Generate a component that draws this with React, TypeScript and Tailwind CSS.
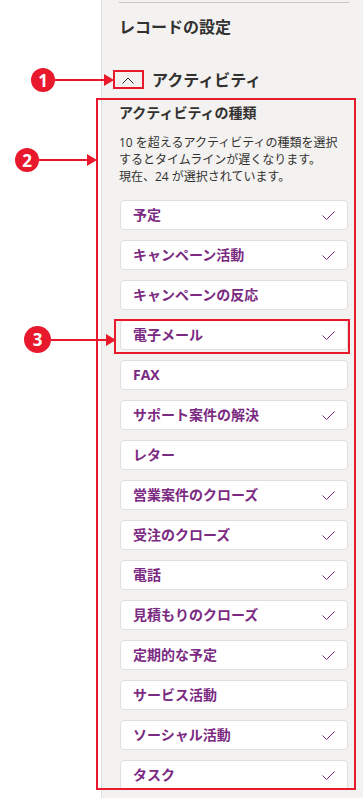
import React from "react";

const items: { label: string; checked: boolean }[] = [
  { label: "予定", checked: true },
  { label: "キャンペーン活動", checked: true },
  { label: "キャンペーンの反応", checked: false },
  { label: "電子メール", checked: true },
  { label: "FAX", checked: false },
  { label: "サポート案件の解決", checked: true },
  { label: "レター", checked: false },
  { label: "営業案件のクローズ", checked: true },
  { label: "受注のクローズ", checked: true },
  { label: "電話", checked: true },
  { label: "見積もりのクローズ", checked: true },
  { label: "定期的な予定", checked: true },
  { label: "サービス活動", checked: false },
  { label: "ソーシャル活動", checked: true },
  { label: "タスク", checked: true },
];

function Check() {
  return (
    <svg width="13" height="9" viewBox="0 0 13 9" fill="none">
      <polyline points="0.5,4.5 4.5,8.5 12.5,0.5" stroke="#7b2a82" strokeWidth="1" />
    </svg>
  );
}

// numbered red callout: badge, line, arrow head in one row
function Callout({ n, size, line, className }: { n: string; size: string; line: string; className: string }) {
  return (
    <div className={`absolute flex items-center ${className}`}>
      <div
        className={`flex shrink-0 items-center justify-center rounded-full bg-[#e8192c] text-[17px] font-bold leading-none text-white ${size}`}
      >
        {n}
      </div>
      <div className={`h-[2px] bg-[#e8192c] ${line}`} />
      <svg width="10" height="12" viewBox="0 0 10 12" className="-ml-px shrink-0">
        <polygon points="0,0 10,6 0,12" fill="#e8192c" />
      </svg>
    </div>
  );
}

export default function App() {
  return (
    <div
      className="relative flex h-[798px] w-[363px] overflow-hidden bg-white text-[#323130]"
      style={{ fontFamily: '"Open Sans", "Noto Sans CJK JP", sans-serif' }}
    >
      <div className="w-[101px] shrink-0" />

      {/* settings panel */}
      <div className="flex-1 border-l border-[#e1dfdd] bg-[#f3f2f1] pl-[17px]">
        <div className="mt-[2px] h-px w-[230px] bg-[#c8c6c4]" />
        <h2 className="mt-[13px] text-[16px] font-bold leading-[22px]">レコードの設定</h2>

        <div className="mt-[32px] flex h-[20px] items-center">
          <svg width="12" height="7" viewBox="0 0 12 7" fill="none" className="ml-[3px]">
            <polyline points="0.5,6.5 6,1 11.5,6.5" stroke="#323130" strokeWidth="1" />
          </svg>
          <span className="ml-[18px] text-[16px] font-semibold leading-[20px]">アクティビティ</span>
        </div>

        <h3 className="mt-[13px] text-[14px] font-bold leading-[20px]">アクティビティの種類</h3>
        <p className="mt-[11px] text-[12px] leading-[17px]">
          10 を超えるアクティビティの種類を選択
          <br />
          するとタイムラインが遅くなります。
          <br />
          現在、24 が選択されています。
        </p>

        <div className="ml-px mt-[15px] flex w-[228px] flex-col gap-[10px]">
          {items.map((it) => (
            <div
              key={it.label}
              className="flex h-[30px] items-center justify-between rounded-[4px] border border-[#e1dfdd] bg-white px-[12px]"
            >
              <span className="text-[14px] font-bold leading-none text-[#7b2a82]">{it.label}</span>
              {it.checked && <Check />}
            </div>
          ))}
        </div>
      </div>

      {/* annotations */}
      <Callout n="1" size="h-[24px] w-[24px]" line="w-[50px]" className="left-[31px] top-[68px]" />
      <div className="absolute left-[113px] top-[70px] h-[19px] w-[31px] border-2 border-[#e8192c]" />

      <Callout n="2" size="h-[24px] w-[24px]" line="w-[49px]" className="left-[15px] top-[148px]" />
      <div className="absolute left-[96px] top-[98px] h-[692px] w-[260px] border-2 border-[#e8192c]" />

      <Callout n="3" size="h-[27px] w-[27px]" line="w-[56px]" className="left-[24px] top-[326px]" />
      <div className="absolute left-[114px] top-[319px] h-[35px] w-[236px] border-2 border-[#e8192c]" />
    </div>
  );
}
